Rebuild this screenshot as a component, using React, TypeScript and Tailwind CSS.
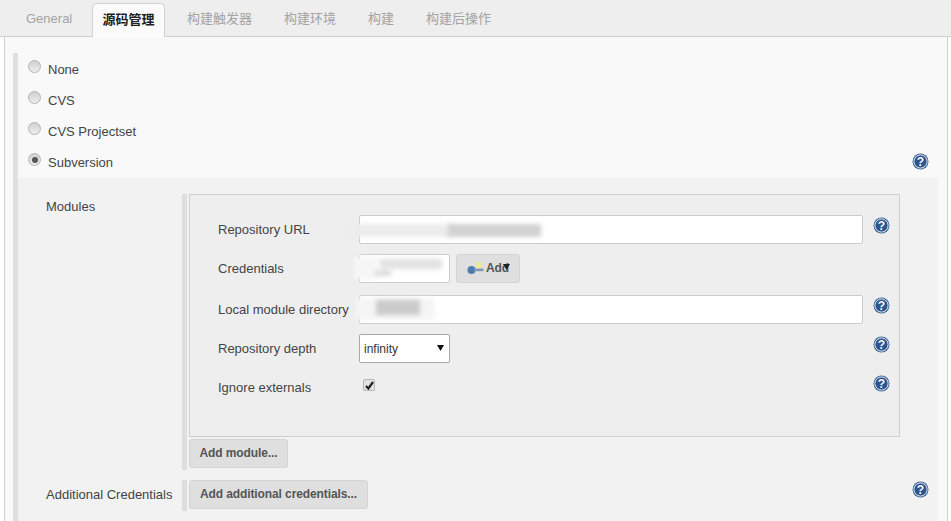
import React from "react";

const font = { fontFamily: '"Liberation Sans", "Noto Sans CJK SC", Arial, sans-serif' };

function Help() {
  return (
    <svg width="17" height="17" viewBox="0 0 17 17" className="block shrink-0">
      <circle cx="8.5" cy="8.5" r="8" fill="#3d6596" />
      <circle cx="8.5" cy="8.5" r="6.6" fill="#2f5590" stroke="#dfe7f0" strokeWidth="1" />
      <text x="8.5" y="12.6" textAnchor="middle" fontSize="12" fontWeight="700" fill="#f2f5f9" fontFamily="Liberation Sans, sans-serif">?</text>
    </svg>
  );
}

function Radio({ label, checked }: { label: string; checked?: boolean }) {
  return (
    <div className="flex h-[31px] items-center">
      <div className="relative mb-[6px] ml-[10px] flex h-[13px] w-[13px] items-center justify-center rounded-full border border-[#b4b4b4] bg-gradient-to-b from-[#d0d0d0] to-[#ededed]">
        {checked && <div className="h-[6px] w-[6px] rounded-full bg-[#555]" />}
      </div>
      <span className="ml-[7px] text-[13px] text-[#444]">{label}</span>
    </div>
  );
}

function Btn({ children, className = "" }: { children: React.ReactNode; className?: string }) {
  return (
    <div className={`flex h-[29px] items-center rounded-[3px] border border-[#d4d4d4] bg-[#dfdfdf] pb-[2px] text-[12px] font-bold tracking-[-0.1px] text-[#555] ${className}`}>
      {children}
    </div>
  );
}

function Field({ label, children, help = true, mt = "mt-[10px]" }: { label: string; children: React.ReactNode; help?: boolean; mt?: string }) {
  return (
    <div className={`flex h-[29px] ${mt}`}>
      <div className="w-[169px] shrink-0 pl-[28px] pt-[7px] text-[13px] leading-[15px] whitespace-nowrap text-[#444]">{label}</div>
      <div className="flex w-[514px] shrink-0">{children}</div>
      {help && <div className="mt-[2px]"><Help /></div>}
    </div>
  );
}

function Smudge({ className }: { className: string }) {
  return <div className={`absolute blur-[2px] ${className}`} />;
}

export default function App() {
  return (
    <div className="h-[521px] w-[951px] overflow-hidden bg-white" style={font}>
      <div className="flex h-[37px] items-end border-b border-[#cfcfcf] bg-[#eeeeee] pl-[5px] text-[13px] text-[#a3a3a3]">
        <div className="flex h-[36px] w-[87px] items-center justify-start pl-[21px] pt-[2px]">General</div>
        <div className="-mb-px flex h-[34px] w-[73px] items-center justify-center rounded-t-[5px] border border-b-0 border-[#d2d2d2] bg-[#fbfbfb] pb-[2px] font-bold text-[#222]">源码管理</div>
        <div className="flex h-[36px] items-center pl-[22px] pt-[2px]">构建触发器</div>
        <div className="flex h-[36px] items-center pl-[32px] pt-[2px]">构建环境</div>
        <div className="flex h-[36px] items-center pl-[32px] pt-[2px]">构建</div>
        <div className="flex h-[36px] items-center pl-[32px] pt-[2px]">构建后操作</div>
      </div>

      <div className="ml-[4px] mr-[3px] h-[484px] border-x border-[#d0d0d0] bg-[#f9f9f9] pl-[8px] pt-[16px]">
        <div className="h-[468px] border-l-[5px] border-[#e0e0e0]">
          <div className="pr-[18px] pt-[1px]">
            <div className="flex flex-col">
              <Radio label="None" />
              <Radio label="CVS" />
              <Radio label="CVS Projectset" />
              <div className="relative">
                <Radio label="Subversion" checked />
                <div className="absolute right-0 top-[6px]"><Help /></div>
              </div>
            </div>
          </div>

          <div className="mr-[9px] h-[343px] bg-[#f2f2f2] pt-[16px]">
            <div className="flex">
              <div className="w-[164px] shrink-0 pl-[28px] pt-[5px] text-[13px] leading-[15px] text-[#444]">Modules</div>
              <div className="w-[5px] shrink-0 self-stretch bg-[#dedede]" />
              <div className="ml-[2px]">
                <div className="h-[243px] w-[711px] border border-[#cfcfcf] bg-[#eeeeee] pt-[20px]">
                  <Field label="Repository URL" mt="mt-0">
                    <div className="relative h-[29px] w-[504px] rounded-[2px] border border-[#cccccc] bg-white">
                      <Smudge className="-left-[8px] top-[8px] h-[13px] w-[100px] bg-[#ececec]" />
                      <Smudge className="left-[88px] top-[8px] h-[13px] w-[93px] bg-[#d2d2d2]" />
                    </div>
                  </Field>
                  <Field label="Credentials" help={false}>
                    <div className="relative h-[29px] w-[91px] rounded-[2px] border border-[#cccccc] bg-white">
                      <Smudge className="-left-[6px] top-[2px] h-[22px] w-[24px] bg-[#f6f6f6]" />
                      <Smudge className="left-[20px] top-[4px] h-[10px] w-[62px] bg-[#e2e2e2]" />
                      <Smudge className="left-[15px] top-[15px] h-[6px] w-[16px] bg-[#dcdcdc]" />
                    </div>
                    <Btn className="ml-[6px] w-[64px] pl-[10px]">
                      <svg width="17" height="13" viewBox="0 0 17 13" className="mt-[2px] shrink-0">
                        <circle cx="12" cy="3" r="3" fill="#efe98a" />
                        <circle cx="4.5" cy="8" r="4" fill="#4f7bb0" />
                        <rect x="7" y="6.6" width="9.5" height="2.6" fill="#7d98b8" />
                      </svg>
                      <span className="relative ml-[2px] text-[#555]">
                        Add
                        <svg width="7" height="6" viewBox="0 0 7 6" className="absolute -right-[1px] top-[5px]"><path d="M0 0H7L3.5 6Z" fill="#222" /></svg>
                      </span>
                    </Btn>
                  </Field>
                  <Field label="Local module directory" mt="mt-[12px]">
                    <div className="relative h-[29px] w-[504px] rounded-[2px] border border-[#cccccc] bg-white">
                      <Smudge className="-left-[4px] top-[2px] h-[22px] w-[78px] bg-[#f5f5f5]" />
                      <Smudge className="left-[16px] top-[4px] h-[15px] w-[44px] bg-[#cbcbcb]" />
                    </div>
                  </Field>
                  <Field label="Repository depth">
                    <div className="relative flex h-[29px] w-[91px] items-center rounded-[2px] border border-[#a9a9a9] bg-white pl-[4px] text-[12px] text-[#333]">
                      infinity
                      <svg width="7" height="6" viewBox="0 0 7 6" className="absolute right-[5px] top-[10px]"><path d="M0 0H7L3.5 6Z" fill="#111" /></svg>
                    </div>
                  </Field>
                  <Field label="Ignore externals">
                    <div className="pl-[4px] pt-[6px]">
                      <div className="flex h-[12px] w-[12px] items-center justify-center rounded-[2px] border border-[#b5b5b5] bg-[#e2e2e2]">
                        <svg width="9" height="9" viewBox="0 0 9 9"><path d="M1 5L3.4 7.5L8 1" fill="none" stroke="#222" strokeWidth="2.2" /></svg>
                      </div>
                    </div>
                  </Field>
                </div>
                <Btn className="mt-[2px] mb-[2px] w-[99px] justify-center">Add module...</Btn>
              </div>
            </div>

            <div className="mt-[10px] flex">
              <div className="w-[164px] shrink-0 pl-[28px] pt-[7px] text-[13px] leading-[15px] whitespace-nowrap text-[#444]">Additional Credentials</div>
              <div className="h-[31px] w-[5px] shrink-0 bg-[#dedede]" />
              <Btn className="ml-[2px] w-[179px] justify-center">Add additional credentials...</Btn>
              <div className="ml-[544px] pt-[1px]"><Help /></div>
            </div>
          </div>
        </div>
      </div>
    </div>
  );
}
